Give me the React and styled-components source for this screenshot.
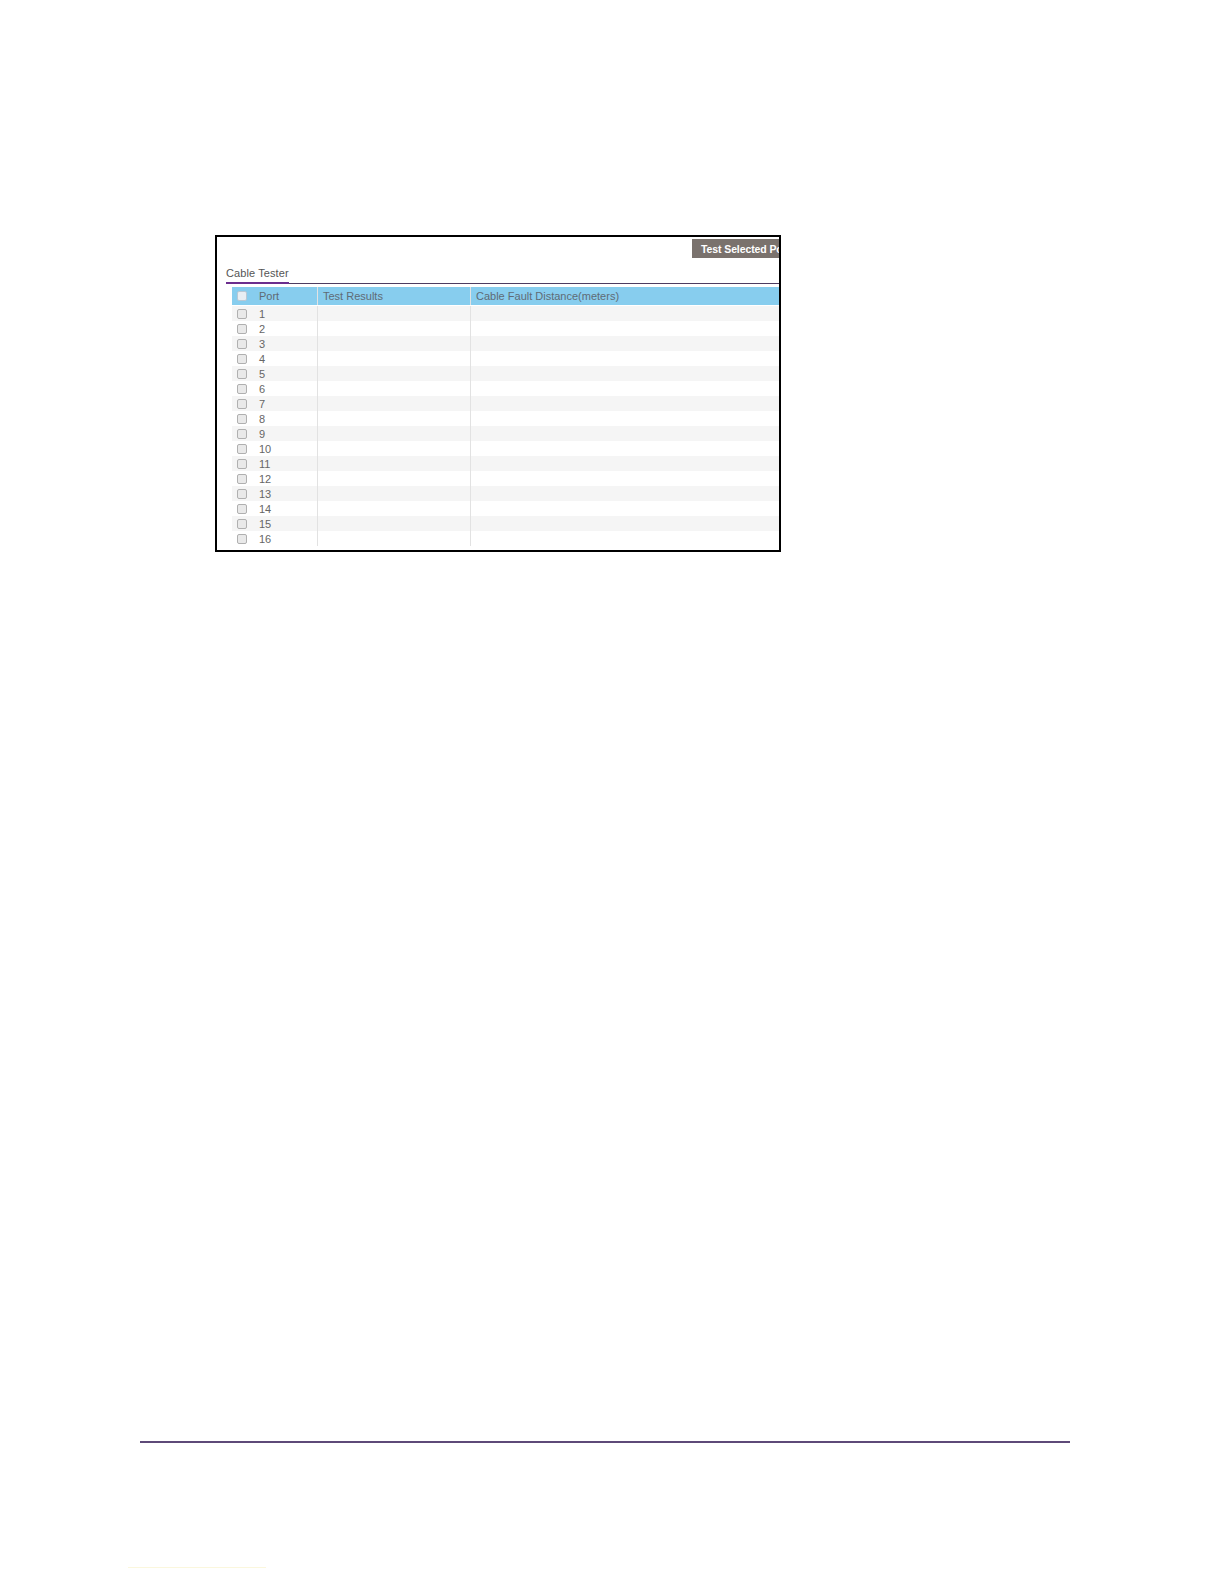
import React from 'react';
import styled, { createGlobalStyle } from 'styled-components';

const GlobalStyle = createGlobalStyle`
  html, body {
    margin: 0;
    padding: 0;
    background: #ffffff;
  }
  body {
    font-family: "Liberation Sans", Arial, sans-serif;
  }
`;

const ports = Array.from({ length: 16 }, (_, i) => i + 1);

export default function App() {
  return (
    <Page>
      <GlobalStyle />
      <Figure>
        <Toolbar>
          <ActionBtn type="button">Test Selected Ports</ActionBtn>
        </Toolbar>
        <TabBar>
          <Tab>Cable Tester</Tab>
        </TabBar>
        <Table>
          <HeaderRow>
            <Cell>
              <Check $header />
            </Cell>
            <Cell>Port</Cell>
            <Cell $divider>Test Results</Cell>
            <Cell $divider>Cable Fault Distance(meters)</Cell>
          </HeaderRow>
          {ports.map((p) => (
            <Row key={p} $odd={p % 2 === 1}>
              <Cell>
                <Check />
              </Cell>
              <Cell>{p}</Cell>
              <Cell $divider></Cell>
              <Cell $divider></Cell>
            </Row>
          ))}
        </Table>
      </Figure>
      <Spacer />
      <FooterRule />
      <FooterLink />
    </Page>
  );
}

const Page = styled.div`
  width: 1224px;
  height: 1584px;
  padding-top: 235px;
  box-sizing: border-box;
  display: flex;
  flex-direction: column;
`;

const Figure = styled.div`
  margin-left: 215px;
  width: 566px;
  height: 317px;
  box-sizing: border-box;
  border: 2px solid #000;
  overflow: hidden;
  display: flex;
  flex-direction: column;
`;

const Toolbar = styled.div`
  display: flex;
  padding-left: 475px;
  padding-top: 2px;
`;

const ActionBtn = styled.button`
  flex-shrink: 0;
  height: 19px;
  padding: 0 8px 0 9px;
  border: none;
  background: #7a726d;
  color: #ffffff;
  font-family: "Liberation Sans", Arial, sans-serif;
  font-size: 10.5px;
  font-weight: bold;
  white-space: nowrap;
  letter-spacing: -0.1px;
`;

const TabBar = styled.div`
  margin: 9px 0 0 9px;
  border-bottom: 1px solid #4d3c61;
  display: flex;
`;

const Tab = styled.div`
  font-size: 11px;
  color: #555;
  padding: 0 0 3px 0;
  border-bottom: 2px solid #6b2e8e;
  margin-bottom: -1px;
  letter-spacing: 0.1px;
`;

const Table = styled.div`
  margin: 3px 0 0 15px;
  display: flex;
  flex-direction: column;
`;

const HeaderRow = styled.div`
  display: grid;
  grid-template-columns: 22px 63px 153px 1fr;
  height: 18px;
  background: #87cdee;
  color: #5f6b75;
  font-size: 11px;
  margin-bottom: 1px;
`;

const Row = styled.div`
  display: grid;
  grid-template-columns: 22px 63px 153px 1fr;
  height: 15px;
  background: ${(p) => (p.$odd ? '#f5f5f5' : '#ffffff')};
  color: #666;
  font-size: 11px;
`;

const Cell = styled.div`
  display: flex;
  align-items: center;
  padding-left: 5px;
  white-space: nowrap;
  border-left: ${(p) => (p.$divider ? '1px solid #e2e2e2' : 'none')};
`;

const Check = styled.span`
  display: inline-block;
  width: 8px;
  height: 8px;
  border: 1px solid ${(p) => (p.$header ? '#b8c8d4' : '#b0b0b0')};
  border-radius: 2px;
  background: ${(p) => (p.$header ? '#e8eef3' : '#e9e9e9')};
`;

const Spacer = styled.div`
  height: 889px;
`;

const FooterRule = styled.div`
  margin-left: 140px;
  width: 930px;
  height: 2px;
  background: #5e4a78;
`;

const FooterLink = styled.div`
  margin: 124px 0 0 128px;
  width: 138px;
  height: 1px;
  background: #fbf7dd;
`;
